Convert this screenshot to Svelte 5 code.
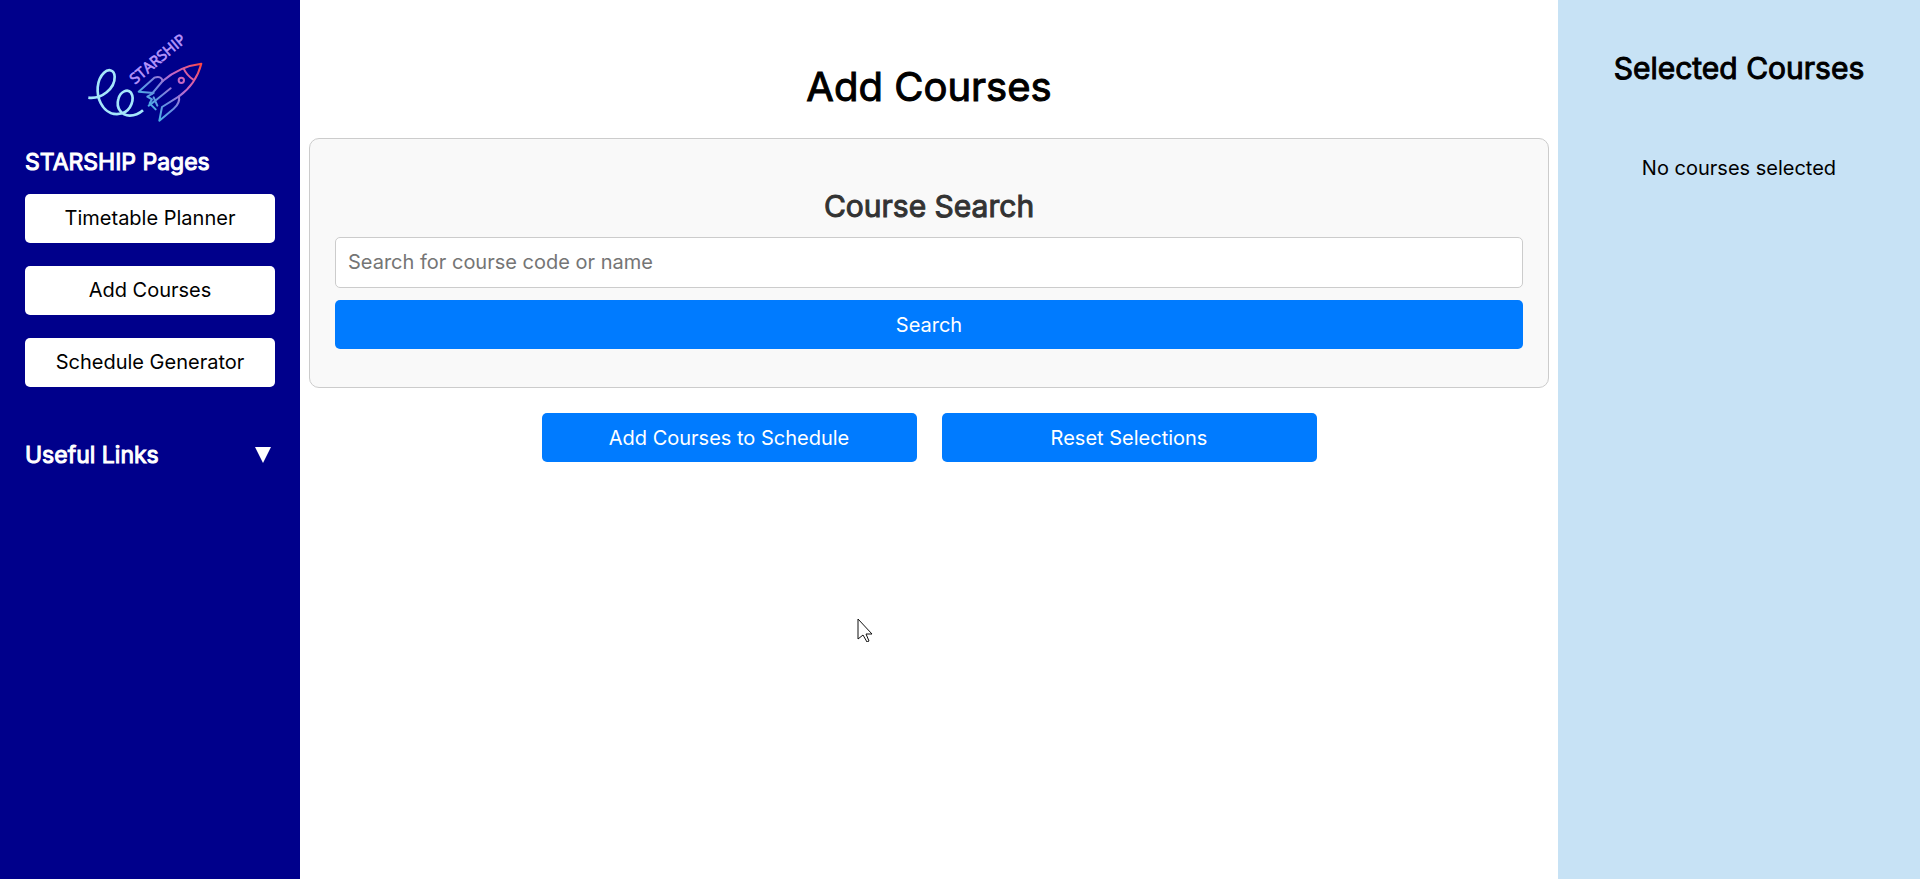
<script>
  const pages = ['Timetable Planner', 'Add Courses', 'Schedule Generator'];
  let query = $state('');
  let open = $state(false);
</script>

<div class="layout">
  <aside class="sidebar">
    <svg class="logo" viewBox="0 0 390 315" role="img" aria-label="Le Starship">
      <defs>
        <linearGradient id="flame" gradientUnits="userSpaceOnUse" x1="205" y1="260" x2="360" y2="120">
          <stop offset="0" stop-color="#45b4e6" />
          <stop offset="0.3" stop-color="#6c8be0" />
          <stop offset="0.6" stop-color="#c069cc" />
          <stop offset="0.85" stop-color="#e65a8c" />
          <stop offset="1" stop-color="#fb4545" />
        </linearGradient>
      </defs>
      <path
        d="M25 218C65 223 105 190 104 155C103 133 85 131 72 143C49 165 48 206 62 234C78 266 105 271 127 265C153 256 165 222 153 203C143 190 121 199 115 222C107 250 126 272 149 272C166 272 179 265 189 256"
        fill="none" stroke="#a5e6fb" stroke-width="8" />
      <g fill="none" stroke="url(#flame)" stroke-width="6" stroke-linejoin="round" stroke-linecap="round">
        <path d="M248 168C280 140 322 121 364 116C354 154 333 188 297 214" />
        <path d="M311 131Q321 152 339 163" />
        <circle cx="304" cy="166" r="8" />
        <path d="M248 168Q244 151 223 158L176 200L221 204L202 215L216 223L209 235L227 253" />
        <path d="M216 206L248 168" />
        <path d="M297 214Q301 234 281 251L238 287L246 246L297 214" />
        <path d="M222 230L272 190M206 242L223 229M221 217L232 242" />
      </g>
      <text class="brand" transform="translate(165 179) rotate(-40)">STARSHIP</text>
    </svg>

    <h2 class="side-title">STARSHIP Pages</h2>
    <nav class="pages">
      {#each pages as page}
        <a href="#{page.toLowerCase().replace(' ', '-')}">{page}</a>
      {/each}
    </nav>
    <button class="links-toggle side-title" aria-expanded={open} onclick={() => (open = !open)}>
      <span>Useful Links</span>
      <svg class="arrow" viewBox="0 0 16 16" aria-hidden="true"><path d="M0 0H16L8 16Z" fill="#fff" /></svg>
    </button>
  </aside>

  <main>
    <h1>Add Courses</h1>
    <form class="card" onsubmit={(e) => e.preventDefault()}>
      <h2 class="heading"><label for="course">Course Search</label></h2>
      <input id="course" type="text" placeholder="Search for course code or name" bind:value={query} />
      <button class="primary" type="submit">Search</button>
    </form>
    <div class="actions">
      <button class="primary">Add Courses to Schedule</button>
      <button class="primary">Reset Selections</button>
    </div>
    <svg class="pointer" viewBox="0 0 16 24" aria-hidden="true">
      <path d="M1 1V21L6 17L10 24L12 23L9 16H15Z" fill="#fff" stroke="#111" />
    </svg>
  </main>

  <aside class="selected">
    <h2 class="heading">Selected Courses</h2>
    <p>No courses selected</p>
  </aside>
</div>

<style>
  :global(body) {
    margin: 0;
    background: #fff;
  }
  .layout {
    display: grid;
    grid-template-columns: 300px 1fr 362px;
    min-height: 100vh;
    font-family: Inter, 'Liberation Sans', sans-serif;
    font-size: 20px;
    line-height: 24px;
    color: #000;
  }
  h1,
  h2,
  p {
    margin: 0;
  }
  .sidebar {
    display: flex;
    flex-direction: column;
    padding: 25px;
    background: #00008b;
  }
  .logo {
    align-self: center;
    width: 130px;
    height: 105px;
    margin-right: 10px;
  }
  .brand {
    font-family: 'Open Sans', 'Noto Sans', sans-serif;
    font-size: 45px;
    fill: #b695fb;
    stroke: #b695fb;
    stroke-width: 2;
  }
  .side-title {
    margin-top: 16px;
    font-size: 23px;
    font-weight: 400;
    line-height: 32px;
    color: #fff;
    -webkit-text-stroke: 1px currentColor;
  }
  .pages {
    display: flex;
    flex-direction: column;
    gap: 23px;
    margin-top: 16px;
  }
  .pages a {
    padding: 12px;
    border-radius: 5px;
    background: #fff;
    color: #000;
    line-height: 25px;
    text-align: center;
    text-decoration: none;
  }
  .links-toggle {
    display: flex;
    align-items: center;
    justify-content: space-between;
    margin-top: 52px;
    padding: 0 4px 0 0;
    border: 0;
    background: none;
    font-family: inherit;
    cursor: pointer;
  }
  .arrow {
    width: 16px;
    height: 16px;
  }
  main {
    padding: 62px 9px 0;
    text-align: center;
  }
  h1 {
    font-size: 40px;
    font-weight: 400;
    line-height: 50px;
    -webkit-text-stroke: 1px currentColor;
  }
  .heading {
    font-size: 30px;
    font-weight: 400;
    line-height: 36px;
    -webkit-text-stroke: 1px currentColor;
  }
  .card {
    display: flex;
    flex-direction: column;
    margin-top: 26px;
    padding: 49px 25px 38px;
    border: 1px solid #ccc;
    border-radius: 10px;
    background: #f9f9f9;
  }
  .card .heading {
    color: #333;
  }
  input {
    margin: 13px 0 12px;
    padding: 12px;
    border: 1px solid #ccc;
    border-radius: 5px;
    background: #fff;
    font: inherit;
    line-height: 25px;
  }
  input::placeholder {
    color: #757575;
    opacity: 1;
  }
  .primary {
    padding: 13px 12px 11px;
    border: 0;
    border-radius: 5px;
    background: #007bff;
    color: #fff;
    font: inherit;
    line-height: 25px;
    cursor: pointer;
  }
  .actions {
    display: flex;
    justify-content: center;
    gap: 25px;
    margin-top: 25px;
  }
  .actions .primary {
    width: 375px;
  }
  .pointer {
    position: absolute;
    left: 857px;
    top: 618px;
    width: 16px;
    height: 24px;
  }
  .selected {
    padding: 50px 25px;
    background: #c7e2f5;
    text-align: center;
  }
  .selected p {
    margin-top: 70px;
  }
</style>
